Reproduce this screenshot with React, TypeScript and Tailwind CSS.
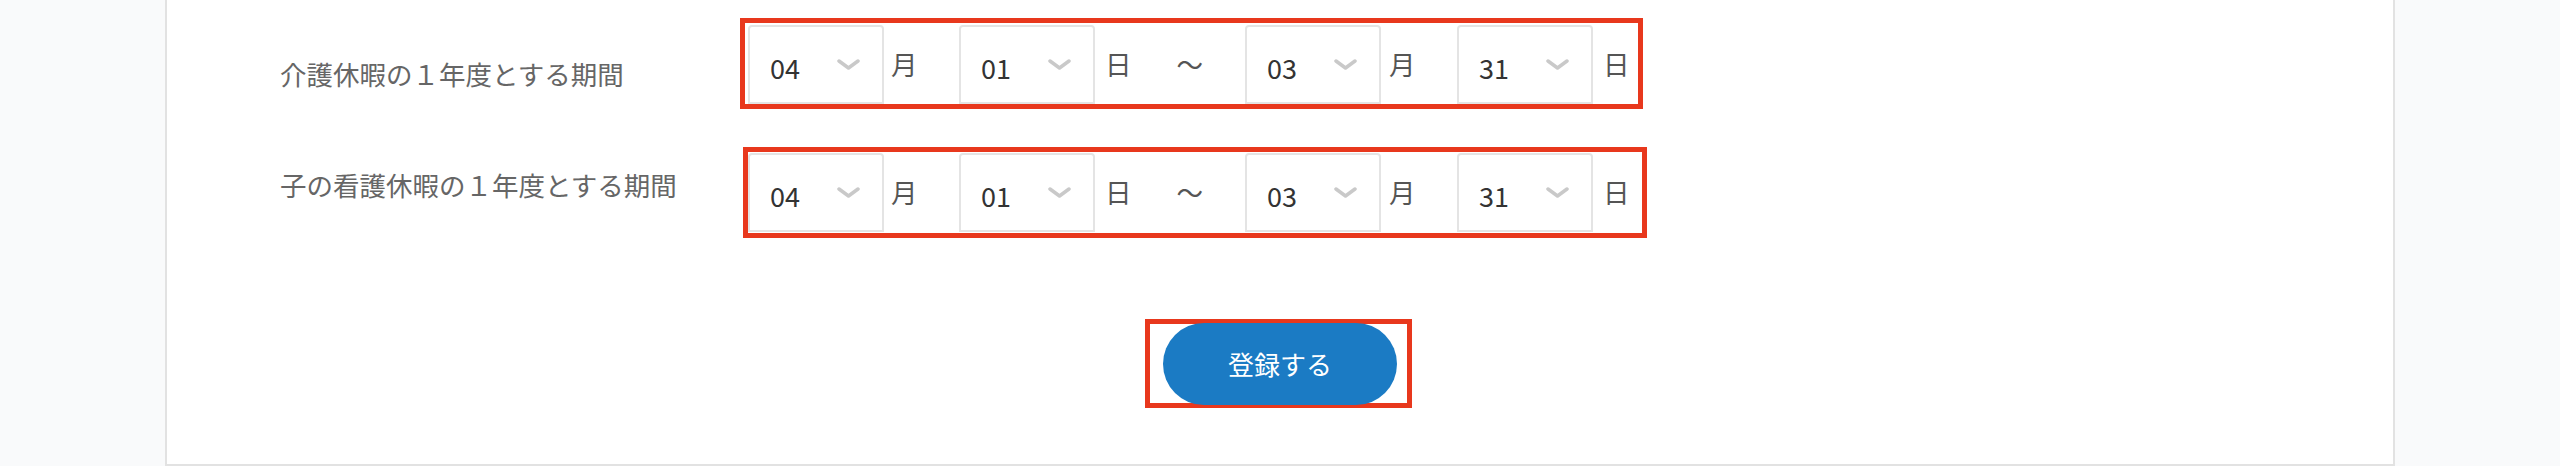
import React from "react";

const FONT = '"Noto Sans CJK JP", "Noto Sans", sans-serif';

function Chevron() {
  return (
    <svg width="23" height="11" viewBox="0 0 23 11" className="block">
      <polyline points="2,2 11.5,9 21,2" fill="none" stroke="#c9c9c9" strokeWidth="3.5" strokeLinecap="round" strokeLinejoin="round" />
    </svg>
  );
}

function Select({ value }: { value: string }) {
  return (
    <div className="w-[136px] h-[79px] shrink-0 border-2 border-[#e4e4e4] rounded-t-[4px] bg-white flex items-center pl-[20px] pr-[22px] justify-between">
      <span className="text-[27px] text-[#333333] leading-none pt-[6px]">{value}</span>
      <Chevron />
    </div>
  );
}

function Unit({ text, className }: { text: string; className: string }) {
  return (
    <div className={`h-[79px] shrink-0 flex items-center text-[26.5px] text-[#555555] leading-none ${className}`}>
      <span>{text}</span>
    </div>
  );
}

function Fields({ s }: { s: [string, string, string, string] }) {
  return (
    <div className="flex">
      <Select value={s[0]} />
      <Unit text="月" className="w-[75px] pl-[7px]" />
      <Select value={s[1]} />
      <div className="w-[150px] h-[79px] shrink-0 flex items-center text-[26.5px] text-[#555555] leading-none pl-[10px]">
        <span>日</span>
        <span className="ml-[45px]">〜</span>
      </div>
      <Select value={s[2]} />
      <Unit text="月" className="w-[76px] pl-[8px]" />
      <Select value={s[3]} />
      <Unit text="日" className="w-[45px] pl-[10px]" />
    </div>
  );
}

export default function App() {
  return (
    <div className="w-full h-[466px] bg-[#f9fafb] flex justify-center overflow-hidden" style={{ fontFamily: FONT }}>
      <div className="w-[2230px] h-[466px] bg-white border-x-2 border-b-2 border-[#e2e2e2] flex flex-col">
        {/* Row 1 */}
        <div className="flex pl-[113px] pt-[18px]">
          <div className="w-[460px] shrink-0">
            <div className="mt-[36px] text-[26.5px] leading-[40px] text-[#666666] whitespace-nowrap">介護休暇の１年度とする期間</div>
          </div>
          <div className="w-[903px] h-[91px] border-[5px] border-[#e8381d] pl-[3px] pt-[2px]">
            <Fields s={["04", "01", "03", "31"]} />
          </div>
        </div>
        {/* Row 2 */}
        <div className="flex pl-[113px] pt-[38px]">
          <div className="w-[463px] shrink-0">
            <div className="mt-[18px] text-[26.5px] leading-[40px] text-[#666666] whitespace-nowrap">子の看護休暇の１年度とする期間</div>
          </div>
          <div className="w-[904px] h-[91px] border-[5px] border-[#e8381d] pt-[1px]">
            <Fields s={["04", "01", "03", "31"]} />
          </div>
        </div>
        {/* Button */}
        <div className="flex justify-center pt-[81px]">
          <div className="w-[267px] h-[89px] border-[5px] border-[#e8381d] flex items-center pl-[13px] mr-[3px]">
            <button className="w-[234px] h-[82px] shrink-0 rounded-full bg-[#1b7bc4] text-white text-[26px] leading-none flex items-center justify-center">
              登録する
            </button>
          </div>
        </div>
      </div>
    </div>
  );
}
